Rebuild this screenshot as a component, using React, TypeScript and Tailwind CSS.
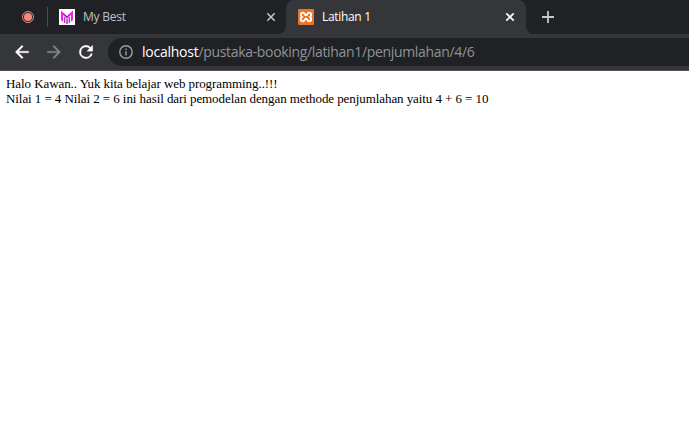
import React from "react";

function Curve({ side }: { side: "left" | "right" }) {
  return (
    <svg width="8" height="34" viewBox="0 0 8 34" className="shrink-0">
      <path d={side === "left" ? "M8 26 V34 H0 A8 8 0 0 0 8 26Z" : "M0 26 V34 H8 A8 8 0 0 1 0 26Z"} fill="#35363a" />
    </svg>
  );
}

function Close({ color, width }: { color: string; width: number }) {
  return (
    <svg width="10" height="10" viewBox="0 0 10 10" className="shrink-0">
      <path d="M1.3 1.3 L8.7 8.7 M8.7 1.3 L1.3 8.7" stroke={color} strokeWidth={width} fill="none" />
    </svg>
  );
}

function TabStrip() {
  return (
    <div className="flex h-[34px] bg-[#202124] text-[12px] leading-[34px]">
      <div className="flex w-[278px] items-center">
        <svg width="14" height="14" viewBox="0 0 14 14" className="ml-[21px] shrink-0">
          <circle cx="7" cy="7" r="5.5" fill="none" stroke="#f28b82" strokeWidth="1" />
          <circle cx="7" cy="7" r="4" fill="#f28b82" />
        </svg>
        <div className="ml-[12px] h-[20px] w-px shrink-0 bg-[#4a4c50]" />
        <svg width="16" height="16" viewBox="0 0 16 16" className="ml-[11px] shrink-0">
          <path d="M0 0H16V16H0Z" fill="#fff" />
          <path d="M2 1.5L8 7L14 1.5V11L12 12.8V6L8 9.5L4 6V12.8L2 11Z" fill="#ee22ee" />
          <path d="M5.6 8V14M10.4 8V14" fill="none" stroke="#d91fdd" strokeWidth="1.5" />
          <path d="M8 9.5V15" stroke="#777078" strokeWidth="1.6" />
          <path d="M4.5 5L8 8.2L11.5 5" fill="none" stroke="#a814ad" strokeWidth="1" />
        </svg>
        <span className="ml-[8px] w-[183px] tracking-[-0.25px] text-[#bdc1c6]">My Best</span>
        <Close color="#c4c7cb" width={1.5} />
      </div>
      <Curve side="left" />
      <div className="flex w-[240px] items-center rounded-t-[8px] bg-[#35363a]">
        <svg width="16" height="16" viewBox="0 0 16 16" className="ml-[12px] shrink-0">
          <rect width="16" height="16" rx="1" fill="#ee7425" />
          <path d="M5.3 3.8C2.4 3.2 2.2 6.8 4 8C2.2 9.2 2.4 12.8 5.3 12.2C6.9 11.8 6.5 9.8 8 9.8C9.5 9.8 9.1 11.8 10.7 12.2C13.6 12.8 13.8 9.2 12 8C13.8 6.8 13.6 3.2 10.7 3.8C9.1 4.2 9.5 6.2 8 6.2C6.5 6.2 6.9 4.2 5.3 3.8Z" fill="none" stroke="#fff" strokeWidth="2" />
        </svg>
        <span className="ml-[8px] w-[183px] tracking-[-0.32px] text-white">Latihan 1</span>
        <Close color="#ffffff" width={1.7} />
      </div>
      <Curve side="right" />
      <svg width="12" height="12" viewBox="0 0 12 12" className="ml-[8px] mt-[11px] shrink-0">
        <path d="M6 0V12M0 6H12" stroke="#c4c7cb" strokeWidth="1.8" />
      </svg>
    </div>
  );
}

function Toolbar() {
  return (
    <div className="flex h-[37px] border-b border-[#505155] bg-[#35363a] pt-[4px]">
      <div className="flex h-[28px] w-[108px] shrink-0 items-center pl-[12px]">
        <svg width="20" height="20" viewBox="0 0 24 24" className="shrink-0">
          <path d="M20 11H7.83l5.59-5.59L12 4l-8 8 8 8 1.41-1.41L7.83 13H20v-2z" fill="#fff" stroke="#fff" strokeWidth=".4" />
        </svg>
        <svg width="20" height="20" viewBox="0 0 24 24" className="ml-[12px] shrink-0">
          <path d="M12 4l-1.41 1.41L16.17 11H4v2h12.17l-5.58 5.59L12 20l8-8z" fill="#838487" stroke="#838487" strokeWidth=".3" />
        </svg>
        <svg width="20" height="20" viewBox="0 0 24 24" className="ml-[12px] shrink-0">
          <path d="M17.65 6.35A7.96 7.96 0 0 0 12 4a8 8 0 1 0 7.73 10h-2.08A6 6 0 1 1 12 6c1.66 0 3.14.69 4.22 1.78L13 11h7V4l-2.35 2.35z" fill="#fff" stroke="#fff" strokeWidth=".4" />
        </svg>
      </div>
      <div className="flex h-[28px] flex-1 items-center rounded-l-full bg-[#202124] pl-[11px]">
        <svg width="14" height="14" viewBox="0 0 14 14" className="shrink-0">
          <circle cx="7" cy="7" r="6.2" fill="none" stroke="#9aa0a6" strokeWidth="1.4" />
          <path d="M7 6.2V10.4M7 3.6V5" stroke="#9aa0a6" strokeWidth="1.4" />
        </svg>
        <span className="ml-[9px] whitespace-nowrap text-[14px] leading-[28px] tracking-[-0.33px] text-[#8f9398]"><span className="tracking-[-0.25px] text-white">localhost</span>/pustaka-booking/latihan1/penjumlahan/4/6</span>
      </div>
    </div>
  );
}

export default function App() {
  return (
    <div className="h-[425px] w-[689px] overflow-hidden bg-white font-['Open_Sans','Noto_Sans',sans-serif]">
      <TabStrip />
      <Toolbar />
      <main className="whitespace-nowrap pl-[6px] pt-[5px] font-['Liberation_Serif',serif] text-[13px] leading-[15px] tracking-[-0.075px] text-black">
        <p>Halo Kawan.. Yuk kita belajar web programming..!!!</p>
        <p>Nilai 1 = 4 Nilai 2 = 6 ini hasil dari pemodelan dengan methode penjumlahan yaitu 4 + 6 = 10</p>
      </main>
    </div>
  );
}
